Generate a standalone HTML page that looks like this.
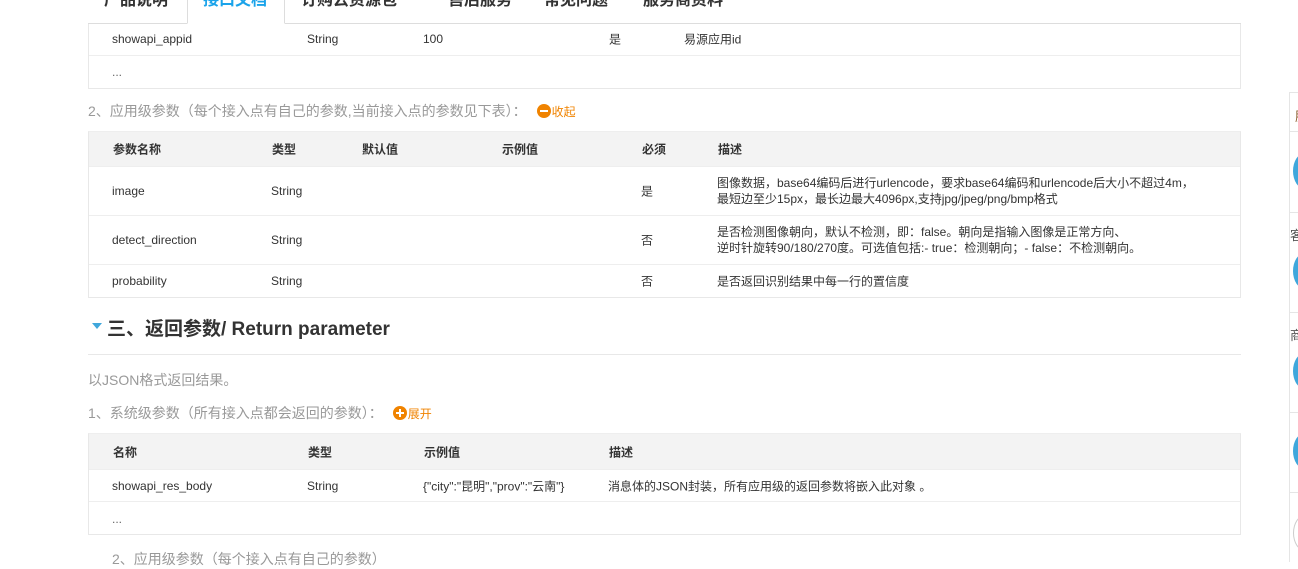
<!DOCTYPE html>
<html><head><meta charset="utf-8"><style>
*{margin:0;padding:0;box-sizing:border-box}
body{width:1298px;height:551px;overflow:hidden;background:#fff;font-family:"Liberation Sans","Noto Sans CJK SC",sans-serif;color:#333;font-size:12px;position:relative}
.a{position:absolute;white-space:nowrap}
.tab{position:absolute;top:-12px;font-size:16px;color:#333;height:35px;line-height:26px;font-weight:bold}
.box{position:absolute;left:88px;width:1153px;border:1px solid #e8e8e8;border-top:none}
.row{position:absolute;left:0;right:0;border-bottom:1px solid #eee}
.hd{background:#f3f3f3;font-weight:bold}
.t{position:absolute;transform:translateY(-50%)}
.gray{color:#999;font-size:14px}
.ic{display:inline-block;width:14px;height:14px;border-radius:50%;background:#f08300;vertical-align:-2px;position:relative;margin-right:1px;margin-left:6px}
.ic:before{content:"";position:absolute;left:3px;top:6px;width:8px;height:2px;background:#fff}
.ic.p:after{content:"";position:absolute;left:6px;top:3px;width:2px;height:8px;background:#fff}
.or{color:#f08300;font-size:12px}
.circ{position:absolute;left:1293px;width:24px;height:36px;border-radius:50%;background:#3fa7dc}
</style></head><body>
<div class="a" style="left:88px;top:23px;width:1153px;border-top:1px solid #ddd"></div>
<div class="tab" style="left:104px">产品说明</div>
<div class="a" style="left:187px;top:-2px;width:98px;height:26px;border:1px solid #ddd;border-bottom:1px solid #fff;background:#fff"></div>
<div class="tab" style="left:203px;color:#1aa3ea">接口文档</div>
<div class="tab" style="left:301px">订购云资源包</div>
<div class="tab" style="left:448px">售后服务</div>
<div class="tab" style="left:544px">常见问题</div>
<div class="tab" style="left:643px">服务商资料</div>

<div class="box" style="top:24px;height:65px">
 <div class="row" style="top:0;height:32px"><span class="t" style="left:23px;top:15px">showapi_appid</span><span class="t" style="left:218px;top:15px">String</span><span class="t" style="left:334px;top:15px">100</span><span class="t" style="left:520px;top:15px">是</span><span class="t" style="left:595px;top:15px">易源应用id</span></div>
 <div class="row" style="top:32px;height:32px;border:none"><span class="t" style="left:23px;top:16px;color:#666">...</span></div>
</div>

<div class="a gray" style="left:88px;top:101px">2、应用级参数（每个接入点有自己的参数,当前接入点的参数见下表）： <span class="ic"></span><span class="or">收起</span></div>

<div class="box" style="top:131px;height:167px;border-top:1px solid #eee">
 <div class="row hd" style="top:0;height:35px"><span class="t" style="left:24px;top:17px">参数名称</span><span class="t" style="left:183px;top:17px">类型</span><span class="t" style="left:273px;top:17px">默认值</span><span class="t" style="left:413px;top:17px">示例值</span><span class="t" style="left:553px;top:17px">必须</span><span class="t" style="left:629px;top:17px">描述</span></div>
 <div class="row" style="top:35px;height:49px"><span class="t" style="left:23px;top:24px">image</span><span class="t" style="left:182px;top:24px">String</span><span class="t" style="left:552px;top:24px">是</span><span class="t" style="left:628px;top:24px;line-height:16px">图像数据，base64编码后进行urlencode，要求base64编码和urlencode后大小不超过4m，<br>最短边至少15px，最长边最大4096px,支持jpg/jpeg/png/bmp格式</span></div>
 <div class="row" style="top:84px;height:49px"><span class="t" style="left:23px;top:24px">detect_direction</span><span class="t" style="left:182px;top:24px">String</span><span class="t" style="left:552px;top:24px">否</span><span class="t" style="left:628px;top:24px;line-height:16px">是否检测图像朝向，默认不检测，即：false。朝向是指输入图像是正常方向、<br>逆时针旋转90/180/270度。可选值包括:- true：检测朝向；- false：不检测朝向。</span></div>
 <div class="row" style="top:133px;height:33px;border:none"><span class="t" style="left:23px;top:16px">probability</span><span class="t" style="left:182px;top:16px">String</span><span class="t" style="left:552px;top:16px">否</span><span class="t" style="left:628px;top:16px">是否返回识别结果中每一行的置信度</span></div>
</div>

<div class="a" style="left:92px;top:323px;width:0;height:0;border-left:5px solid transparent;border-right:5px solid transparent;border-top:6px solid #3fa7dc"></div>
<div class="a" style="left:107px;top:314px;font-size:19px;font-weight:bold;color:#333">三、返回参数/ Return parameter</div>
<div class="a" style="left:88px;top:354px;width:1153px;border-top:1px solid #e8e8e8"></div>
<div class="a gray" style="left:88px;top:370px">以JSON格式返回结果。</div>
<div class="a gray" style="left:88px;top:403px">1、系统级参数（所有接入点都会返回的参数）： <span class="ic p"></span><span class="or">展开</span></div>

<div class="box" style="top:433px;height:102px;border-top:1px solid #eee">
 <div class="row hd" style="top:0;height:36px"><span class="t" style="left:24px;top:18px">名称</span><span class="t" style="left:219px;top:18px">类型</span><span class="t" style="left:335px;top:18px">示例值</span><span class="t" style="left:520px;top:18px">描述</span></div>
 <div class="row" style="top:36px;height:32px"><span class="t" style="left:23px;top:16px">showapi_res_body</span><span class="t" style="left:218px;top:16px">String</span><span class="t" style="left:334px;top:16px">{"city":"昆明","prov":"云南"}</span><span class="t" style="left:519px;top:16px">消息体的JSON封装，所有应用级的返回参数将嵌入此对象 。</span></div>
 <div class="row" style="top:68px;height:33px;border:none"><span class="t" style="left:23px;top:17px;color:#666">...</span></div>
</div>
<div class="a gray" style="left:112px;top:549px">2、应用级参数（每个接入点有自己的参数）</div>

<div class="a" style="left:1289px;top:92px;width:20px;height:470px;border-left:1px solid #e5e5e5;border-top:1px solid #e5e5e5"></div>
<div class="a" style="left:1289px;top:131px;width:10px;border-top:1px solid #e5e5e5"></div>
<div class="a" style="left:1289px;top:212px;width:10px;border-top:1px solid #e5e5e5"></div>
<div class="a" style="left:1289px;top:312px;width:10px;border-top:1px solid #e5e5e5"></div>
<div class="a" style="left:1289px;top:412px;width:10px;border-top:1px solid #e5e5e5"></div>
<div class="a" style="left:1289px;top:492px;width:10px;border-top:1px solid #e5e5e5"></div>
<div class="circ" style="top:153px"></div>
<div class="circ" style="top:253px"></div>
<div class="circ" style="top:353px"></div>
<div class="circ" style="top:433px"></div>
<div class="a" style="left:1293px;top:515px;width:24px;height:36px;border-radius:50%;border:1px solid #ccc"></div>
<div class="a" style="left:1290px;top:225px;font-size:13px;color:#555">客</div>
<div class="a" style="left:1290px;top:325px;font-size:13px;color:#555">商</div>
<div class="a" style="left:1295px;top:106px;font-size:13px;color:#8a5a2a">服</div>
</body></html>
